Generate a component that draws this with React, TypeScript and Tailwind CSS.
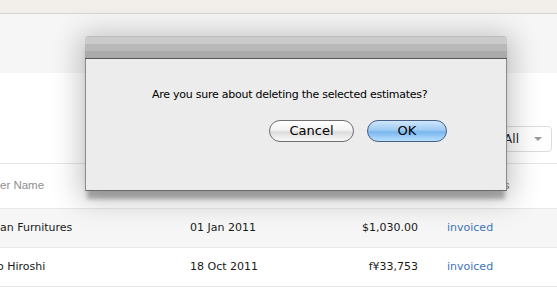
export default function App() {
  const rows = [
    { name: "an Furnitures", date: "01 Jan 2011", amount: "$1,030.00", status: "invoiced", shade: true, nameCls: "" },
    { name: "o Hiroshi", date: "18 Oct 2011", amount: "f¥33,753", status: "invoiced", shade: false, nameCls: "ml-[-3px]" },
  ];

  return (
    <div className="relative w-[557px] h-[296px] overflow-hidden bg-white font-['DejaVu_Sans',sans-serif]">
      {/* page behind the sheet */}
      <div className="h-[14px] bg-[#f2efea] border-b border-[#d6d4d0]" />
      <div className="h-[59px] bg-[#f6f6f6]" />
      <div className="h-[90px] flex items-start justify-end pr-[5px] pt-[53px]">
        <div className="w-[90px] h-[26px] flex items-center justify-end gap-[15px] pr-[9px] border border-[#dcdcdc] rounded-[4px] text-[12px] text-[#222]">
          <span>All</span>
          <span className="w-0 h-0 border-l-[4px] border-r-[4px] border-t-[4px] border-l-transparent border-r-transparent border-t-[#999]" />
        </div>
      </div>
      <div className="border-t border-[#e6e6e6] h-[45px] flex items-center text-[11.5px] text-[#8e8e8e] font-['Liberation_Sans',sans-serif]">
        <div className="w-[477px] shrink-0">er Name</div>
        <div className="shrink-0 whitespace-nowrap text-[#777]">Status</div>
      </div>
      {rows.map((r) => (
        <div
          key={r.date}
          className={`h-[39px] border-t border-[#e8e8e8] flex items-center text-[11px] text-[#1a1a1a] ${r.shade ? "bg-[#f6f6f6]" : "bg-white"}`}
        >
          <div className="w-[190px] overflow-hidden whitespace-nowrap">
            <span className={`inline-block ${r.nameCls}`}>{r.name}</span>
          </div>
          <div className="w-[150px]">{r.date}</div>
          <div className="w-[78px] text-right">{r.amount}</div>
          <div className="ml-[29px] text-[#3d74b8]">{r.status}</div>
        </div>
      ))}
      <div className="border-t border-[#e8e8e8]" />

      {/* sheet dialog */}
      <div className="absolute left-[85px] top-[36px] w-[422px] h-[155px] flex flex-col rounded-t-[3px] shadow-[0_10px_4px_-2px_rgba(0,0,0,0.28),0_4px_28px_6px_rgba(0,0,0,0.22)]">
        <div className="h-[23px] flex flex-col rounded-t-[3px] overflow-hidden border-t border-[#bdbdbd]">
          <div className="h-[7px] bg-[#cbcbcb]" />
          <div className="h-[7px] bg-[#b9b9b9]" />
          <div className="h-[7px] bg-[#aaaaaa]" />
          <div className="h-[1px] bg-[#555]" />
        </div>
        <div className="flex-1 bg-[#ececec] border-x border-b border-x-[#8c8c8c] border-b-[#6a6a6a] flex flex-col">
          <div className="pt-[29px] pl-[66px] text-[11px] tracking-[-0.25px] text-black leading-[14px]">
            Are you sure about deleting the selected estimates?
          </div>
          <div className="flex gap-[13px] pl-[183px] pt-[18px]">
            <button className="w-[85px] h-[22px] rounded-full border border-[#6f6f6f] bg-[linear-gradient(#ffffff,#f3f3f3_45%,#dcdcdc_55%,#f8f8f8)] text-[13px] text-black leading-[20px]">
              Cancel
            </button>
            <button className="w-[80px] h-[22px] rounded-full border border-[#4a5f86] bg-[linear-gradient(#cfe6fb,#9fcbf3_45%,#7ab6ee_55%,#b8e0fd)] text-[13px] text-black leading-[20px]">
              OK
            </button>
          </div>
        </div>
      </div>
    </div>
  );
}
